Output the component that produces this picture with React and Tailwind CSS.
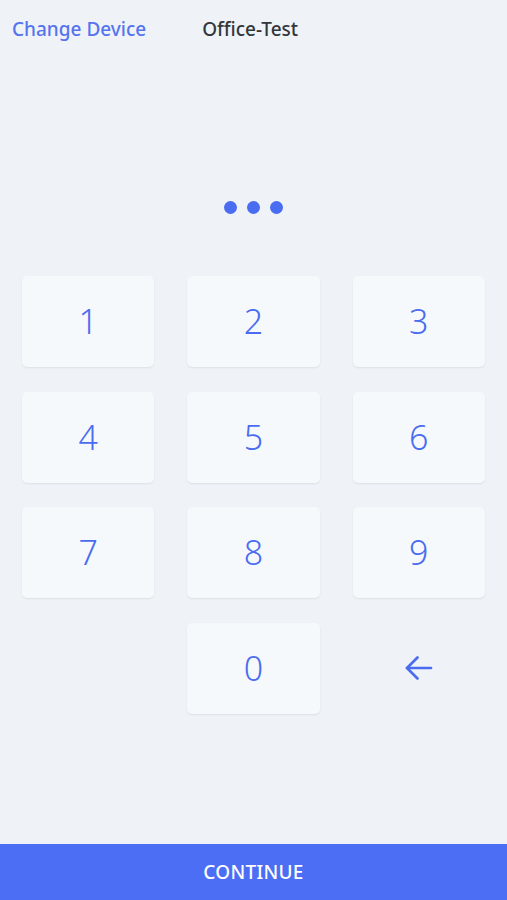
import React, { useState } from "react";

const Key = ({ label, onPress }) => (
  <button
    onClick={() => onPress(label)}
    className="h-[91px] rounded-[5px] bg-[#f6f9fb] shadow-[0_1px_2px_rgba(0,0,0,0.08)] text-[34px] font-light text-[#4a6cf0] flex items-center justify-center"
  >
    {label}
  </button>
);

const App = () => {
  const [pin, setPin] = useState("123");

  const press = (d) => setPin((p) => (p + d).slice(0, 6));
  const back = () => setPin((p) => p.slice(0, -1));

  return (
    <div className="w-full h-[900px] bg-[#eff3f7] flex flex-col font-['Noto_Sans',sans-serif]">
      <header className="h-[58px] flex items-center pl-3 gap-[56px]">
        <button className="text-[19px] font-medium text-[#5574ee]">Change Device</button>
        <span className="text-[19px] font-medium text-[#33373c]">Office-Test</span>
      </header>

      <div className="h-[156px] flex items-end justify-center">
        <div className="flex gap-[10px]">
          {pin.split("").map((_, i) => (
            <span key={i} className="w-[13px] h-[13px] rounded-full bg-[#4a6cf0]" />
          ))}
        </div>
      </div>

      <div className="mt-[62px] px-[22px] grid grid-cols-3 gap-x-[33px] gap-y-[24.5px]">
        {["1", "2", "3", "4", "5", "6", "7", "8", "9"].map((n) => (
          <Key key={n} label={n} onPress={press} />
        ))}
        <div />
        <Key label="0" onPress={press} />
        <button onClick={back} className="h-[91px] flex items-center justify-center text-[#4a6cf0]">
          <svg width="36" height="36" viewBox="0 0 24 24" fill="none" stroke="currentColor" strokeWidth="1.8" strokeLinecap="round" strokeLinejoin="round">
            <path d="M20 12H4" />
            <path d="M11 5l-7 7 7 7" />
          </svg>
        </button>
      </div>

      <div className="flex-1" />
      <button className="h-[56px] w-full bg-[#4b6ef5] text-white text-[19px] font-medium tracking-[0.3px]">
        CONTINUE
      </button>
    </div>
  );
};

export default App;
